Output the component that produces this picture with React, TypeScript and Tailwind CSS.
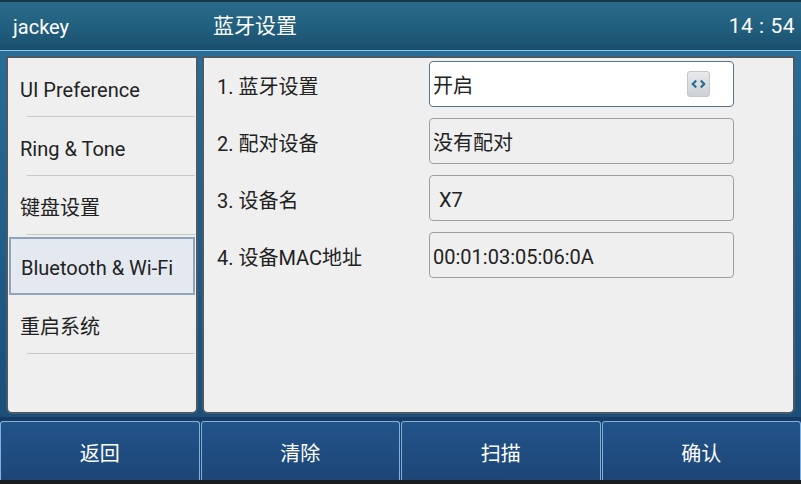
const FONT = 'Roboto, "Noto Sans CJK SC", sans-serif';

const menu = [
  { label: "UI Preference" },
  { label: "Ring & Tone" },
  { label: "键盘设置" },
  { label: "Bluetooth & Wi-Fi", active: true },
  { label: "重启系统" },
];

const rows = [
  { label: "1. 蓝牙设置", value: "开启", select: true },
  { label: "2. 配对设备", value: "没有配对" },
  { label: "3. 设备名", value: "X7", pad: true },
  { label: "4. 设备MAC地址", value: "00:01:03:05:06:0A" },
];

const buttons = ["返回", "清除", "扫描", "确认"];

function SwitchButton() {
  return (
    <div className="ml-auto mr-[23px] flex h-[26px] w-[23px] items-center justify-center rounded-[3px] border border-[#c4c8cc] bg-gradient-to-b from-[#e8eaec] to-[#cdd1d4]">
      <svg width="15" height="10" viewBox="0 0 15 10">
        <path d="M5.2 1.5 L1.8 5 L5.2 8.5" fill="none" stroke="#2a6b96" strokeWidth="2.2" />
        <path d="M9.8 1.5 L13.2 5 L9.8 8.5" fill="none" stroke="#2a6b96" strokeWidth="2.2" />
      </svg>
    </div>
  );
}

export default function App() {
  return (
    <div
      className="flex h-[484px] w-[801px] flex-col overflow-hidden bg-[#1f5e87]"
      style={{ fontFamily: FONT }}
    >
      {/* Title bar */}
      <header className="flex h-[50px] items-center border-t-2 border-[#17384b] bg-gradient-to-b from-[#2b6a8b] via-[#22607f] to-[#1a4f6d] pt-[2px] text-[20px] text-white">
        <span className="w-[200px] pl-[13px]">jackey</span>
        <span className="pl-[13px] text-[21px]">蓝牙设置</span>
        <span className="ml-auto pr-[6px] text-[21px] tracking-[0.5px]">14 : 54</span>
      </header>
      <div className="h-px bg-[#8cc3dd]" />

      {/* Panels */}
      <div className="flex flex-1 gap-[4px] bg-gradient-to-b from-[#276d97] to-[#1b4f7a] px-[6px] pb-[3px] pt-[5px]">
        <aside className="flex w-[192px] flex-col rounded-b-[6px] border-2 border-[#4d5963] bg-[#efefef] text-[20px] text-[#222]">
          {menu.map((m) =>
            m.active ? (
              <div
                key={m.label}
                className="mx-[1px] mt-[2px] flex h-[58px] items-center border-2 border-[#8fa3bb] bg-[#e3e9ef] pl-[10px] pt-[3px]"
              >
                {m.label}
              </div>
            ) : (
              <div key={m.label} className="flex h-[59px] flex-col">
                <div className="flex flex-1 items-center pl-[12px] pt-[5px]">{m.label}</div>
                <div className="ml-[19px] mr-[1px] h-px bg-[#c6c9cc]" />
              </div>
            )
          )}
        </aside>

        <main className="flex flex-1 flex-col gap-[11px] rounded-b-[6px] border-2 border-[#4d5963] bg-[#efefef] pt-[3px] text-[20px] text-[#222]">
          {rows.map((r) => (
            <div key={r.label} className="flex h-[46px] items-center">
              <span className="w-[225px] pl-[13px] pt-[5px]">{r.label}</span>
              <div
                className={
                  r.select
                    ? "flex h-[46px] w-[305px] items-center rounded-[4px] border border-[#5b7489] bg-white pl-[3px]"
                    : "flex h-[46px] w-[305px] items-center rounded-[4px] border border-[#9da1a4] bg-[#efefef] " +
                      (r.pad ? "pl-[9px]" : "pl-[3px]")
                }
              >
                <span className="pt-[4px]">{r.value}</span>
                {r.select && <SwitchButton />}
              </div>
            </div>
          ))}
        </main>
      </div>

      {/* Soft keys */}
      <footer className="flex h-[63px] gap-[1px] bg-[#173b62] pt-[4px]">
        {buttons.map((b) => (
          <button
            key={b}
            className="flex flex-1 items-center justify-center rounded-t-[3px] border-x border-t border-[#7fb2dc] bg-gradient-to-b from-[#22548a] to-[#1d4677] pt-[6px] text-[20px] text-white"
          >
            {b}
          </button>
        ))}
      </footer>
      <div className="h-[4px] bg-[#1c1c1c]" />
    </div>
  );
}
